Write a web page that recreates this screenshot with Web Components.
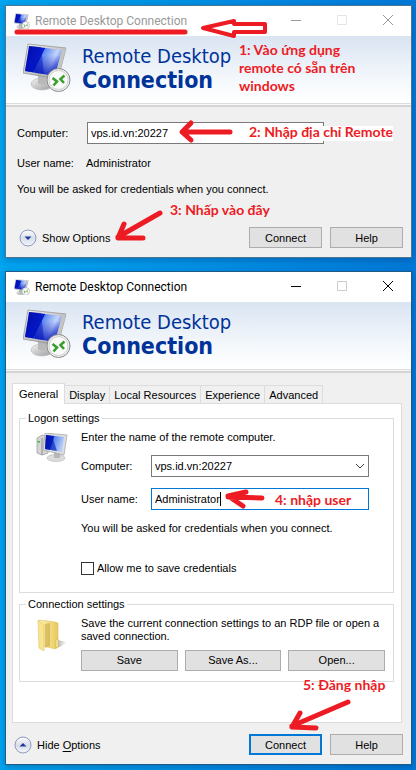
<!DOCTYPE html>
<html lang="en">
<head>
<meta charset="utf-8">
<title>Remote Desktop Connection</title>
<style>
  html {
    min-height: 100%;
    background: linear-gradient(90deg, #00a4ef 0%, #0090e4 45%, #0078d7 100%);
  }

  body {
    margin: 0;
    padding: 5px 4px 5px 5px;
    display: flex;
    flex-direction: column;
    gap: 13px;
    font: 11px/14px "Liberation Sans", Arial, sans-serif;
    color: #000;
  }

  .values {
    display: grid;
    grid-template-columns: 69px 1fr;
    row-gap: 12px;
    padding: 0 0 0 11px;
  }

  .wide {
    grid-column: 1 / -1;
  }

  .first {
    padding: 15px 87px 20px 0;
  }

  .first rd-field {
    padding-left: 11px;
    margin-bottom: 12px;
  }

  .logon {
    display: flex;
    flex-direction: column;
    gap: 11px;
    padding: 5px 16px 17px 0;
  }

  .logon rd-check {
    margin-top: 15px;
  }

  .saving {
    padding: 6px 0 10px;
    line-height: 13px;
  }

  .actions {
    display: grid;
    grid-template-columns: repeat(3, 1fr);
    gap: 7px;
    margin-top: 7px;
  }
</style>
</head>
<body>

<rd-window caption="Remote Desktop Connection" inactive>
  <div class="first">
    <rd-field label="Computer:" value="vps.id.vn:20227"></rd-field>
    <div class="values">
      <span>User name:</span><span>Administrator</span>
      <span class="wide">You will be asked for credentials when you connect.</span>
    </div>
  </div>
  <rd-footer text="Show Options" indent>
    <rd-button>Connect</rd-button>
    <rd-button>Help</rd-button>
  </rd-footer>
  <rd-marks slot="marks" arrows="
    M11 26H179|
    M197 22L228 15V18H259V26H228V30Z|
    M224 126H177M185 117L176 126L185 134|
    M154 207L112 231M118 218L112 232H137">
    <rd-note style="left: 233px; top: 35px">1: Vào ứng dụng<br>remote có sẵn trên<br>windows</rd-note>
    <rd-note filled style="left: 243px; top: 117px">2: Nhập địa chỉ Remote</rd-note>
    <rd-note style="left: 164px; top: 195px">3: Nhấp vào đây</rd-note>
  </rd-marks>
</rd-window>

<rd-window caption="Remote Desktop Connection">
  <rd-tabs>
    <rd-group legend="Logon settings" icon="computer">
      <div class="logon">
        <span>Enter the name of the remote computer.</span>
        <rd-field label="Computer:" value="vps.id.vn:20227" type="select"></rd-field>
        <rd-field label="User name:" value="Administrator" active></rd-field>
        <span>You will be asked for credentials when you connect.</span>
        <rd-check>Allow me to save credentials</rd-check>
      </div>
    </rd-group>
    <rd-group legend="Connection settings" icon="folder">
      <div class="saving">
        Save the current connection settings to an RDP file or open a saved connection.
        <div class="actions">
          <rd-button>Save</rd-button>
          <rd-button>Save As...</rd-button>
          <rd-button>Open...</rd-button>
        </div>
      </div>
    </rd-group>
  </rd-tabs>
  <rd-footer text="Hide Options" open>
    <rd-button primary>Connect</rd-button>
    <rd-button>Help</rd-button>
  </rd-footer>
  <rd-marks slot="marks" arrows="
    M256 226L222 225M240 220L222 224L237 234|
    M342 430L286 454M294 441L286 455L310 456">
    <rd-note style="left: 269px; top: 219px">4: nhập user</rd-note>
    <rd-note style="left: 297px; top: 404px">5: Đăng nhập</rd-note>
  </rd-marks>
</rd-window>

<script>
const ICONS = {
  remote: `
    <svg viewBox="0 0 48 50" aria-hidden="true">
      <defs>
        <linearGradient id="screen" x1="0" y1="0.2" x2="1" y2="0.6">
          <stop offset="0" stop-color="#0008a8"/><stop offset="0.42" stop-color="#0620d8"/>
          <stop offset="0.43" stop-color="#5c86f0"/><stop offset="0.75" stop-color="#c4d6fc"/>
          <stop offset="1" stop-color="#4a6ee6"/>
        </linearGradient>
        <linearGradient id="shade" x1="0" y1="0" x2="0" y2="1">
          <stop offset="0.3" stop-color="#0010b8" stop-opacity="0"/><stop offset="1" stop-color="#0010b8" stop-opacity="0.9"/>
        </linearGradient>
        <linearGradient id="metal" x1="0" y1="0" x2="1" y2="1">
          <stop offset="0" stop-color="#f4f4f4"/><stop offset="1" stop-color="#9c9c9c"/>
        </linearGradient>
      </defs>
      <ellipse cx="19" cy="41" rx="11" ry="6" fill="url(#metal)" stroke="#b4b4b4" stroke-width="0.6"/>
      <path d="M15 32L24 34L23 41Q18 43 15 40Z" fill="#b8b8b8"/>
      <path d="M5 1L43 5L35 36L0 30Z" fill="url(#metal)" stroke="#8c8c8c" stroke-width="0.7"/>
      <path d="M6 3L39 7L32 33L2 28Z" fill="url(#screen)"/>
      <path d="M6 3L39 7L32 33L2 28Z" fill="url(#shade)"/>
      <path d="M6 3L18 4L21 31L12 30Z" fill="#0414b8" opacity="0.5"/>
      <path d="M43 5L35 36L32 33L39 7Z" fill="#c4c4c4"/>
      <circle cx="35.500" cy="37" r="11.500" fill="#f0f0f0" stroke="#8a8a8a"/>
      <circle cx="35.500" cy="37" r="9.500" fill="#fafafa" stroke="#d0d0d0"/>
      <path d="M29.500 35L34 38.500L30.500 42.500M41.500 32.500L37.500 36L41 40" fill="none" stroke="#3c9e2e" stroke-width="2.600"/>
    </svg>`,
  computer: `
    <svg viewBox="0 0 32 29" aria-hidden="true">
      <defs>
        <linearGradient id="glass" x1="0" y1="0" x2="1" y2="0.3">
          <stop offset="0" stop-color="#0008a0"/><stop offset="0.45" stop-color="#0828d0"/>
          <stop offset="0.5" stop-color="#5c88f0"/><stop offset="1" stop-color="#b4ccfa"/>
        </linearGradient>
      </defs>
      <path d="M1 5L6 2L12 4V20L6 22L1 20Z" fill="#d4d4d4" stroke="#989898" stroke-width="0.7"/>
      <path d="M6 5V22" stroke="#808080" stroke-width="0.8"/>
      <path d="M1.500 8.500L4 9" stroke="#30c030" stroke-width="1.500"/>
      <ellipse cx="20" cy="25" rx="9" ry="3.500" fill="#dcdcdc" stroke="#bcbcbc" stroke-width="0.7"/>
      <path d="M18 19H24V25H18Z" fill="#b8b8b8"/>
      <path d="M9 0L31 2L28 22L7 17Z" fill="#dedede" stroke="#a0a0a0" stroke-width="0.7"/>
      <path d="M10 2L28 4L26 19L9 16Z" fill="url(#glass)"/>
      <path d="M10 2L16 3L21 18L9 16Z" fill="#0418b0" opacity="0.6"/>
    </svg>`,
  folder: `
    <svg viewBox="0 0 32 32" aria-hidden="true">
      <defs>
        <linearGradient id="leaf" x1="0" y1="0" x2="1" y2="0">
          <stop offset="0" stop-color="#fdf3b4"/><stop offset="1" stop-color="#e8c95c"/>
        </linearGradient>
        <linearGradient id="cast" x1="0" y1="0" x2="1" y2="0">
          <stop offset="0" stop-color="#909090"/><stop offset="1" stop-color="#fff"/>
        </linearGradient>
      </defs>
      <path d="M16 29L22 21L31 23L24 28Z" fill="url(#cast)"/>
      <path d="M3 1L19 3L22 4V28L19 30L8 27Z" fill="url(#leaf)" stroke="#dcc060" stroke-width="0.6"/>
      <path d="M9 5L14 4V27L9 29Z" fill="#c8a848" opacity="0.6"/>
      <path d="M2 1L8 6V32L3 29Z" fill="#f8e48c" stroke="#e0c468" stroke-width="0.6"/>
      <path d="M20 20H22V28L20 29Z" fill="#fff6c8" stroke="#d8b840" stroke-width="0.8"/>
    </svg>`,
};

class RdIcon extends HTMLElement {
  connectedCallback() {
    this.attachShadow({ mode: "open" }).innerHTML = `
      <style>
        :host { display: block; flex: none; }
        svg { display: block; width: 100%; }
      </style>
      ${ICONS[this.getAttribute("name")]}`;
  }
}

class RdBanner extends HTMLElement {
  connectedCallback() {
    this.attachShadow({ mode: "open" }).innerHTML = `
      <style>
        :host {
          display: flex;
          gap: 11px;
          padding: 7px 17px 10px;
          background: linear-gradient(#dae4f2, #f4f8fc 65%, #fff);
          border-bottom: 1px solid #dcdcdc;
          box-shadow: 0 1px #f8f8f8, 0 3px #d4d4d4;
          margin-bottom: 3px;
          color: #003399;
          font-family: "DejaVu Sans Condensed", "DejaVu Sans", sans-serif;
        }
        rd-icon { width: 48px; }
        div { padding-top: 1px; font-size: 20px; line-height: 24px; }
        strong { display: block; font-size: 23px; }
      </style>
      <rd-icon name="remote"></rd-icon>
      <div>Remote Desktop<strong>Connection</strong></div>`;
  }
}

class RdWindow extends HTMLElement {
  connectedCallback() {
    this.attachShadow({ mode: "open" }).innerHTML = `
      <style>
        :host {
          --ink: #000;
          --faint: #ccc;
          display: block;
          position: relative;
          border: 1px solid #1d5c88;
          background: #f0f0f0;
          box-shadow: 0 2px 6px rgba(0, 30, 80, 0.3);
        }
        :host([inactive]) {
          --ink: #999;
          --faint: #e4e4e4;
          border-color: #4a7894;
        }
        header {
          display: flex;
          align-items: center;
          height: 30px;
          padding-left: 8px;
          background: #fff;
          color: var(--ink);
          font: 12px/16px Roboto, sans-serif;
        }
        rd-icon { width: 16px; margin-right: 5px; }
        h1 { flex: 1; margin: 0; font: inherit; }
        header button {
          display: grid;
          place-items: center;
          width: 46px;
          height: 30px;
          border: 0;
          padding: 0;
          background: none;
        }
        header svg { width: 12px; height: 12px; fill: none; stroke: var(--ink); }
        .max svg { stroke: var(--faint); }
      </style>
      <header>
        <rd-icon name="remote"></rd-icon>
        <h1>${this.getAttribute("caption")}</h1>
        <button aria-label="Minimize"><svg viewBox="0 0 12 12"><path d="M1 5.500H11"/></svg></button>
        <button class="max" aria-label="Maximize" disabled><svg viewBox="0 0 12 12"><path d="M1.500 0.500H10.500V9.500H1.500Z"/></svg></button>
        <button aria-label="Close"><svg viewBox="0 0 12 12"><path d="M1 0L11 10M11 0L1 10"/></svg></button>
      </header>
      <rd-banner></rd-banner>
      <slot></slot>
      <slot name="marks"></slot>`;
  }
}

class RdButton extends HTMLElement {
  connectedCallback() {
    this.attachShadow({ mode: "open" }).innerHTML = `
      <style>
        :host { display: block; }
        button {
          display: block;
          width: 100%;
          height: 21px;
          padding: 0;
          border: 1px solid #adadad;
          background: #e1e1e1;
          color: inherit;
          font: inherit;
        }
        :host([primary]) button { border: 2px solid #0078d7; }
      </style>
      <button type="button"><slot></slot></button>`;
  }
}

class RdField extends HTMLElement {
  connectedCallback() {
    const value = this.getAttribute("value");
    const control =
      this.getAttribute("type") === "select"
        ? `<select id="control"><option>${value}</option></select>
           <svg viewBox="0 0 10 6" aria-hidden="true"><path d="M1 1L5 5L9 1"/></svg>`
        : `<input id="control" type="text" value="${value}">`;
    this.attachShadow({ mode: "open" }).innerHTML = `
      <style>
        :host {
          display: grid;
          grid-template-columns: 70px 1fr;
          align-items: center;
        }
        .box { position: relative; }
        input, select {
          appearance: none;
          display: block;
          box-sizing: border-box;
          width: 100%;
          height: 22px;
          margin: 0;
          padding: 0 3px;
          border: 1px solid #7a7a7a;
          border-radius: 0;
          outline: 0;
          background: #fff;
          color: inherit;
          font: inherit;
        }
        :host([active]) input { border-color: #0078d7; }
        svg {
          position: absolute;
          right: 4px;
          top: 8px;
          width: 10px;
          height: 6px;
          fill: none;
          stroke: #444;
        }
        .caret {
          position: absolute;
          left: 69px;
          top: 4px;
          width: 1px;
          height: 14px;
          background: #000;
        }
      </style>
      <label for="control">${this.getAttribute("label")}</label>
      <div class="box">${control}${this.hasAttribute("active") ? '<i class="caret"></i>' : ""}</div>`;
  }
}

class RdCheck extends HTMLElement {
  connectedCallback() {
    this.attachShadow({ mode: "open" }).innerHTML = `
      <style>
        :host { display: block; }
        label { display: flex; align-items: center; gap: 3px; }
        input {
          appearance: none;
          width: 13px;
          height: 13px;
          margin: 0;
          border: 1px solid #333;
          background: #fff;
        }
      </style>
      <label><input type="checkbox"><slot></slot></label>`;
  }
}

class RdGroup extends HTMLElement {
  connectedCallback() {
    this.attachShadow({ mode: "open" }).innerHTML = `
      <style>
        :host { display: block; }
        fieldset {
          min-width: 0;
          margin: 0;
          padding: 0 8px 0 6px;
          border: 1px solid #dcdcdc;
        }
        legend { padding: 0 2px; }
        div { display: flex; gap: 13px; padding-left: 10px; }
        rd-icon { width: 32px; margin-top: 8px; }
        slot { display: block; flex: 1; }
      </style>
      <fieldset>
        <legend>${this.getAttribute("legend")}</legend>
        <div>
          <rd-icon name="${this.getAttribute("icon")}"></rd-icon>
          <slot></slot>
        </div>
      </fieldset>`;
  }
}

class RdTabs extends HTMLElement {
  connectedCallback() {
    const tabs = ["General", "Display", "Local Resources", "Experience", "Advanced"];
    this.attachShadow({ mode: "open" }).innerHTML = `
      <style>
        :host { display: block; padding: 10px 9px 0 6px; }
        nav { display: flex; align-items: flex-end; }
        button {
          height: 18px;
          padding: 0 4px;
          border: 1px solid #dcdcdc;
          border-width: 1px 1px 0 0;
          background: #f0f0f0;
          color: inherit;
          font: inherit;
        }
        button[aria-selected="true"] {
          position: relative;
          height: 21px;
          margin-bottom: -1px;
          padding: 0 6px;
          border-left-width: 1px;
          background: #fff;
        }
        section {
          display: flex;
          flex-direction: column;
          gap: 4px;
          padding: 7px 7px 40px 6px;
          border: 1px solid #dcdcdc;
          background: #fff;
        }
      </style>
      <nav role="tablist">
        ${tabs.map((tab, i) => `<button role="tab" aria-selected="${i === 0}">${tab}</button>`).join("")}
      </nav>
      <section role="tabpanel"><slot></slot></section>`;
  }
}

class RdFooter extends HTMLElement {
  connectedCallback() {
    const [verb, rest] = this.getAttribute("text").split(" ");
    const open = this.hasAttribute("open");
    const word = open ? `<u>${rest[0]}</u>${rest.slice(1)}` : rest;
    this.attachShadow({ mode: "open" }).innerHTML = `
      <style>
        :host {
          display: flex;
          align-items: center;
          justify-content: space-between;
          padding: 11px 8px 9px;
        }
        :host([indent]) { padding-left: 13px; }
        .toggle {
          display: flex;
          align-items: center;
          gap: 5px;
          height: 21px;
          padding: 0;
          border: 0;
          background: none;
          color: inherit;
          font: inherit;
        }
        u { text-underline-offset: 2px; }
        svg { width: 18px; height: 18px; }
        .buttons {
          display: grid;
          grid-template-columns: 73px 73px;
          gap: 8px;
        }
      </style>
      <button class="toggle" aria-expanded="${open}">
        <svg viewBox="0 0 18 18" aria-hidden="true">
          <defs>
            <linearGradient id="knob" x1="0" y1="0" x2="0" y2="1">
              <stop offset="0" stop-color="#fff"/><stop offset="0.5" stop-color="#d8dde8"/><stop offset="1" stop-color="#f4f6fa"/>
            </linearGradient>
          </defs>
          <circle cx="9" cy="9" r="8" fill="url(#knob)" stroke="#8f9bc0"/>
          <path d="${open ? "M5.500 10.500L9 7L12.500 10.500Z" : "M5.500 7.500H12.500L9 11Z"}" fill="#1c3c9c"/>
        </svg>
        <span>${verb} ${word}</span>
      </button>
      <div class="buttons"><slot></slot></div>`;
  }
}

class RdMarks extends HTMLElement {
  connectedCallback() {
    const paths = this.getAttribute("arrows").split("|");
    this.attachShadow({ mode: "open" }).innerHTML = `
      <style>
        :host { position: absolute; inset: 0; pointer-events: none; }
        svg { position: absolute; width: 100%; height: 100%; }
        path {
          fill: none;
          stroke: #ed1c24;
          stroke-width: 5;
          stroke-linecap: round;
          stroke-linejoin: round;
        }
        path[d$="Z"] { stroke-width: 4; }
      </style>
      <svg aria-hidden="true">${paths.map((d) => `<path d="${d.trim()}"/>`).join("")}</svg>
      <slot></slot>`;
  }
}

class RdNote extends HTMLElement {
  connectedCallback() {
    this.attachShadow({ mode: "open" }).innerHTML = `
      <style>
        :host {
          position: absolute;
          color: #ed1c24;
          font: bold 14px/18px Lato, "Open Sans", sans-serif;
          white-space: nowrap;
        }
        :host([filled]) { background: linear-gradient(#fff, #fff) 0 3px / 100% 15px no-repeat; }
      </style>
      <slot></slot>`;
  }
}

customElements.define("rd-icon", RdIcon);
customElements.define("rd-banner", RdBanner);
customElements.define("rd-window", RdWindow);
customElements.define("rd-button", RdButton);
customElements.define("rd-field", RdField);
customElements.define("rd-check", RdCheck);
customElements.define("rd-group", RdGroup);
customElements.define("rd-tabs", RdTabs);
customElements.define("rd-footer", RdFooter);
customElements.define("rd-marks", RdMarks);
customElements.define("rd-note", RdNote);
</script>
</body>
</html>
